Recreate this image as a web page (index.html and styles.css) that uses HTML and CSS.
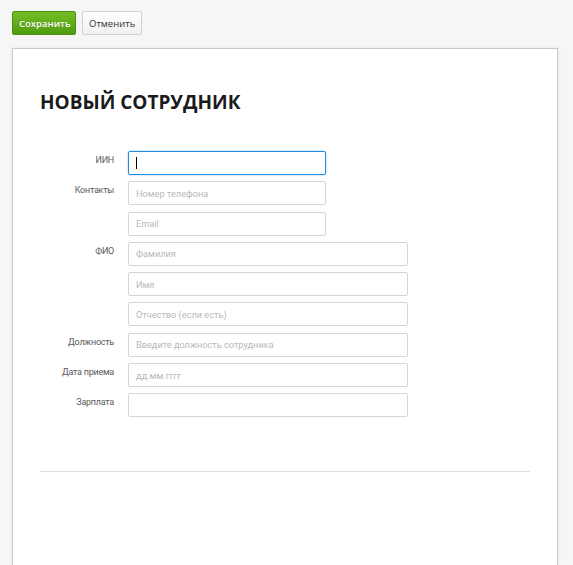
FILE: index.html
```
<!DOCTYPE html>
<html lang="ru">
<head>
<meta charset="utf-8">
<title>Новый сотрудник</title>
<link rel="stylesheet" href="styles.css">
</head>
<body>
<div class="toolbar">
  <button class="btn btn-save">Сохранить</button>
  <button class="btn btn-cancel">Отменить</button>
</div>
<div class="card">
  <h1 class="title">НОВЫЙ СОТРУДНИК</h1>
  <div class="form">
    <label class="lbl">ИИН</label>
    <div class="fields"><div class="inp short focus"><span class="caret"></span></div></div>
    <label class="lbl">Контакты</label>
    <div class="fields">
      <div class="inp short"><span class="ph">Номер телефона</span></div>
      <div class="inp short"><span class="ph">Email</span></div>
    </div>
    <label class="lbl">ФИО</label>
    <div class="fields">
      <div class="inp"><span class="ph">Фамилия</span></div>
      <div class="inp"><span class="ph">Имя</span></div>
      <div class="inp"><span class="ph">Отчество (если есть)</span></div>
    </div>
    <label class="lbl">Должность</label>
    <div class="fields"><div class="inp"><span class="ph">Введите должность сотрудника</span></div></div>
    <label class="lbl">Дата приема</label>
    <div class="fields"><div class="inp"><span class="ph">дд.мм.гггг</span></div></div>
    <label class="lbl">Зарплата</label>
    <div class="fields"><div class="inp"></div></div>
  </div>
  <div class="sep"></div>
</div>
</body>
</html>
```
FILE: styles.css
```
html, body {
  margin: 0;
  padding: 0;
  background: #f6f6f6;
  font-family: "Open Sans", "Noto Sans", sans-serif;
  overflow: hidden;
}
body {
  padding: 11px 12px 0 12px;
  height: 565px;
  box-sizing: border-box;
}
.toolbar {
  display: flex;
  gap: 6px;
  height: 24px;
}
.btn {
  height: 24px;
  padding: 0 6px;
  font-family: "Open Sans", sans-serif;
  font-size: 9.5px;
  border-radius: 2px;
  cursor: pointer;
}
.btn-save {
  width: 64px;
  color: #fff;
  font-weight: 600;
  background: linear-gradient(#74bd25, #4f9c0e);
  border: 1px solid #4b8e12;
  text-shadow: 0 0 1px rgba(0,0,0,0.2);
}
.btn-cancel {
  width: 60px;
  color: #333;
  background: linear-gradient(#ffffff, #f0f0f0);
  border: 1px solid #cfcfcf;
}
.card {
  margin-top: 13px;
  width: 546px;
  height: 517px;
  box-sizing: border-box;
  background: #fff;
  border: 1px solid #cbcbcb;
  border-bottom: none;
  box-shadow: 0 0 3px rgba(0,0,0,0.08);
  padding: 41px 27px 0 27px;
}
.title {
  margin: 0;
  font-size: 19px;
  line-height: 24px;
  font-weight: 700;
  color: #1a1a1a;
}
.form {
  margin-top: 37px;
  display: grid;
  grid-template-columns: 74px 1fr;
  column-gap: 14px;
  row-gap: 6.3px;
}
.lbl {
  text-align: right;
  font-family: "Roboto", sans-serif;
  font-size: 9px;
  color: #5a5a5a;
  padding-top: 4px;
  letter-spacing: -0.25px;
}
.fields {
  display: flex;
  flex-direction: column;
  gap: 6.3px;
}
.inp {
  width: 280px;
  height: 24px;
  box-sizing: border-box;
  border: 1px solid #d6d6d6;
  border-radius: 2px;
  background: #fff;
  display: flex;
  align-items: center;
  padding-left: 7px;
}
.inp.short { width: 198px; }
.inp.focus {
  border-color: #1e8ce0;
  box-shadow: 0 0 2px rgba(30,140,224,0.5);
}
.caret {
  display: block;
  width: 1px;
  height: 12px;
  background: #000;
}
.ph {
  font-family: "Roboto", sans-serif;
  font-size: 9.2px;
  color: #b8b8b8;
}
.sep {
  margin-top: 54px;
  height: 1px;
  background: #e0e0e0;
}
```
